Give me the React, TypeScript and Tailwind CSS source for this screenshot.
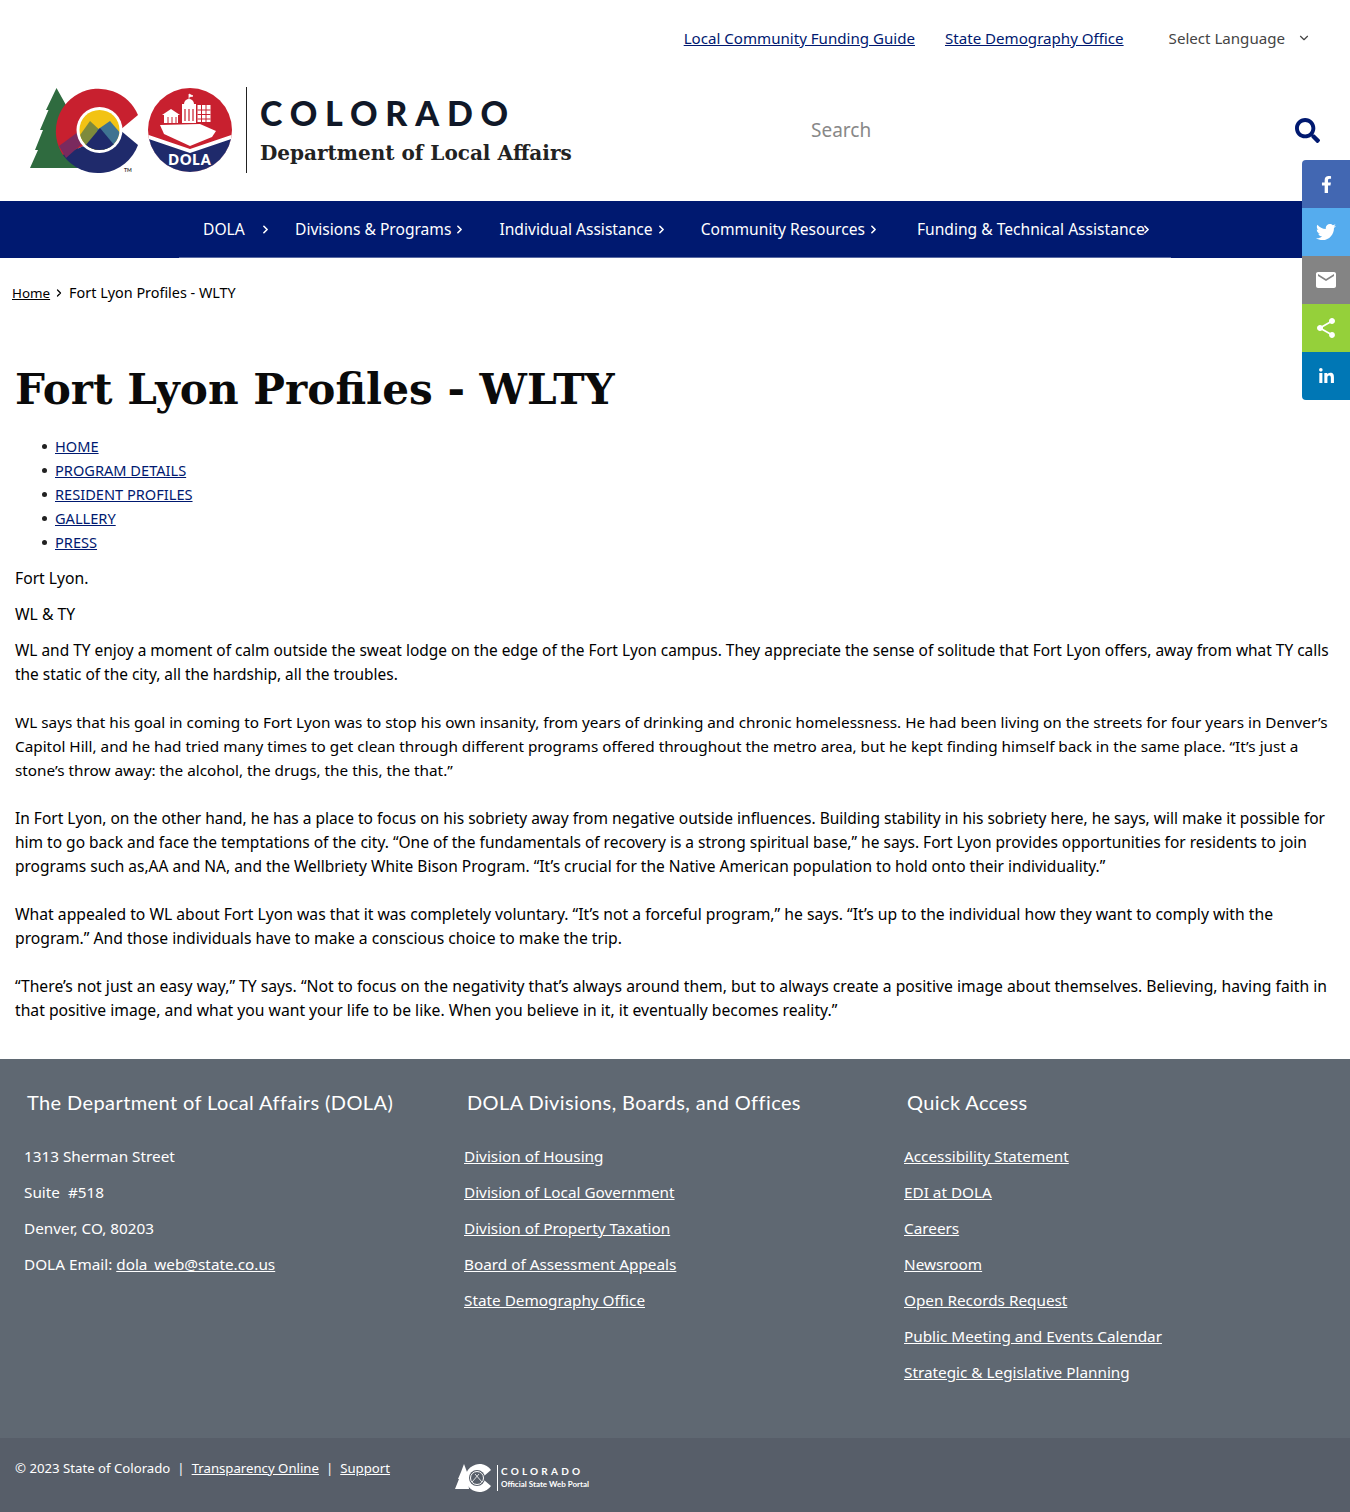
import { ChevronDown, ChevronRight } from "lucide-react";
import { FaFacebookF, FaTwitter, FaLinkedinIn, FaSearch } from "react-icons/fa";
import { MdEmail, MdShare } from "react-icons/md";

const nav = ["HOME", "PROGRAM DETAILS", "RESIDENT PROFILES", "GALLERY", "PRESS"];
const divisions = ["Division of Housing", "Division of Local Government", "Division of Property Taxation", "Board of Assessment Appeals", "State Demography Office"];
const quick = ["Accessibility Statement", "EDI at DOLA", "Careers", "Newsroom", "Open Records Request", "Public Meeting and Events Calendar", "Strategic & Legislative Planning"];

function Logo() {
  return (
    <svg width="208" height="88" viewBox="28 86 208 88">
      <defs>
        <clipPath id="co-sky"><circle cx="99.500" cy="130" r="20" /></clipPath>
        <clipPath id="dola-disc"><circle cx="190" cy="130" r="42" /></clipPath>
      </defs>
      <path d="M56.500 88 L46 110 L48.500 110 L40 130 L43 130 L35 150 L38 150 L30 168 L80 168 L75 120 L66 105 Z" fill="#2f6b3f" />
      <path d="M138 115 A42.700 42.700 0 1 0 63 155 L120 130 Z" fill="#c8202f" />
      <path d="M63 155 A42.700 42.700 0 0 0 138 145 L120 130 Z" fill="#1f2a6b" />
      <path d="M59 146 L66 158 L84 142 L78 132 Z" fill="#7a2a5e" />
      <circle cx="99.500" cy="130" r="23" fill="#ffffff" />
      <g clipPath="url(#co-sky)">
        <rect x="78" y="108" width="44" height="44" fill="#f2c313" />
        <path d="M78 138 L90 121 L104 134 L100 152 L78 152 Z" fill="#7d8a3c" />
        <path d="M97 130 L110 121 L122 135 L122 152 L104 152 Z" fill="#3f7391" />
        <path d="M80 152 L100 128 L120 152 Z" fill="#1f2a6b" />
      </g>
      <text x="124" y="172" fontFamily="Lato, sans-serif" fontWeight="700" fontSize="5" fill="#333333">TM</text>
      <circle cx="190" cy="130" r="42" fill="#c8202f" />
      <g clipPath="url(#dola-disc)">
        <path d="M146 134 L190 149 L234 134 L234 176 L146 176 Z" fill="#ffffff" />
        <path d="M146 138 L190 153 L234 138 L234 176 L146 176 Z" fill="#1f2a6b" />
      </g>
      <path d="M160 125 L200 124 L216 131 L212 137 L190 146 L164 134 Z" fill="#ffffff" />
      <rect x="182" y="104" width="14" height="19" fill="#ffffff" />
      <path d="M184 104 A5 5 0 0 1 194 104 Z" fill="#ffffff" />
      <path d="M189 99 L189 94 L193 96 L189 97" fill="#ffffff" stroke="#ffffff" strokeWidth="0.800" />
      <path d="M185 109 V121 M189 109 V121 M193 109 V121" stroke="#c8202f" strokeWidth="1.200" />
      <rect x="197.500" y="105" width="13" height="17" fill="#ffffff" />
      <path d="M197.500 110 H210.500 M197.500 114.500 H210.500 M197.500 119 H210.500 M201.500 105 V122 M206 105 V122" stroke="#c8202f" strokeWidth="1" />
      <rect x="164" y="115" width="14" height="8" fill="#ffffff" />
      <path d="M162 115 L171 109 L180 115 Z" fill="#ffffff" />
      <path d="M168 117 V123 M172 117 V123 M176 117 V123" stroke="#c8202f" strokeWidth="1" />
      <text x="190" y="165" textAnchor="middle" fontFamily="Lato, sans-serif" fontWeight="800" fontSize="14" letterSpacing="1" fill="#ffffff">DOLA</text>
    </svg>
  );
}

function SmallLogo() {
  return (
    <svg width="38" height="30" viewBox="0 0 38 30">
      <path d="M9 1 L12 9 L14 26 L0 26 L4 16 L3 16 L6 9 Z" fill="#ffffff" />
      <path d="M36 7 A14 14 0 1 0 36 23 L29 17 L29 13 Z" fill="#ffffff" />
      <circle cx="22" cy="15" r="8" fill="#575e69" />
      <circle cx="22" cy="15" r="6.500" fill="none" stroke="#ffffff" strokeWidth="1" />
      <path d="M17 19 L24 11 M20 11 L27 19" stroke="#ffffff" strokeWidth="0.800" />
    </svg>
  );
}

export default function App() {
  return (
    <div className="relative w-[1350px] h-[1512px] overflow-hidden bg-white text-black font-['Noto_Sans',sans-serif] text-[15.700px] leading-[24px] flex flex-col">
      <div className="h-[76px] flex items-center justify-end pr-[39px] text-[15.100px] text-[#001970]">
        <a className="underline">Local Community Funding Guide</a>
        <a className="underline ml-[30px]">State Demography Office</a>
        <span className="ml-[45px] text-[#444] flex items-center gap-[12px]">Select Language <ChevronDown size={14} /></span>
      </div>
      <div className="h-[125px] flex items-center pl-[28px] pr-[30px] pb-[17px]">
        <Logo />
        <div className="ml-[10px] w-px h-[86px] bg-[#222] mr-[13px]" />
        <div className="mt-[2px]">
          <div className="font-['Lato',sans-serif] font-black text-[34px] leading-[40px] tracking-[0.23em] text-[#101828] mb-[4px]">COLORADO</div>
          <div className="font-['DejaVu_Serif',serif] font-bold text-[20px] leading-[32px] text-[#222]">Department of Local Affairs</div>
        </div>
        <div className="ml-auto w-[509px] flex items-center justify-between">
          <span className="text-[#888] text-[19px]">Search</span>
          <FaSearch size={25} className="text-[#001970]" />
        </div>
      </div>
      <div className="h-[57px] bg-[#001970] flex justify-center text-white">
        <div className="w-[992px] h-[57px] border-b border-[#dfe3ee]/40 flex items-center pl-[24px] text-[15.600px] whitespace-nowrap">
          <span className="w-[92px] flex items-center">DOLA <ChevronRight size={13} strokeWidth={3} className="ml-[14px]" /></span>
          <span className="flex items-center gap-[2px]">Divisions &amp; Programs <ChevronRight size={13} strokeWidth={3} /></span>
          <span className="ml-[33px] flex items-center gap-[2px]">Individual Assistance <ChevronRight size={13} strokeWidth={3} /></span>
          <span className="ml-[33px] flex items-center gap-[2px]">Community Resources <ChevronRight size={13} strokeWidth={3} /></span>
          <span className="ml-[37px] flex items-center">Funding &amp; Technical Assistance<ChevronRight size={13} strokeWidth={3} className="-ml-[5px]" /></span>
        </div>
      </div>
      <div className="pl-[12px] pt-[23px] text-[14.400px] flex items-center gap-[3px]">
        <a className="underline text-[13.400px]">Home</a><ChevronRight size={12} strokeWidth={2.500} /><span className="ml-[1px]">Fort Lyon Profiles - WLTY</span>
      </div>
      <h1 className="pl-[15px] mt-[56px] font-['DejaVu_Serif',serif] font-bold text-[42.200px] leading-[56px] text-[#0a0a0a]">Fort Lyon Profiles - WLTY</h1>
      <ul className="mt-[17px] pl-[55px] text-[14.600px] text-[#001970]">
        {nav.map((n) => (
          <li key={n} className="flex items-center -ml-[13px] gap-[8px]">
            <span className="w-[5px] h-[5px] rounded-full bg-[#222]" />
            <a className="underline">{n}</a>
          </li>
        ))}
      </ul>
      <div className="px-[15px] mt-[12px] flex flex-col gap-[12px]">
        <p>Fort Lyon.</p>
        <p>WL &amp; TY</p>
        <div className="flex flex-col gap-[24px]">
          <p className="text-[15.450px]">WL and TY enjoy a moment of calm outside the sweat lodge on the edge of the Fort Lyon campus. They appreciate the sense of solitude that Fort Lyon offers, away from what TY calls the static of the city, all the hardship, all the troubles.</p>
          <p className="text-[15.300px]">WL says that his goal in coming to Fort Lyon was to stop his own insanity, from years of drinking and chronic homelessness. He had been living on the streets for four years in Denver’s Capitol Hill, and he had tried many times to get clean through different programs offered throughout the metro area, but he kept finding himself back in the same place. “It’s just a stone’s throw away: the alcohol, the drugs, the this, the that.”</p>
          <p className="text-[15.500px]">In Fort Lyon, on the other hand, he has a place to focus on his sobriety away from negative outside influences. Building stability in his sobriety here, he says, will make it possible for him to go back and face the temptations of the city. “One of the fundamentals of recovery is a strong spiritual base,” he says. Fort Lyon provides opportunities for residents to join programs such as,AA and NA, and the Wellbriety White Bison Program. “It’s crucial for the Native American population to hold onto their individuality.”</p>
          <p>What appealed to WL about Fort Lyon was that it was completely voluntary. “It’s not a forceful program,” he says. “It’s up to the individual how they want to comply with the program.” And those individuals have to make a conscious choice to make the trip.</p>
          <p>“There’s not just an easy way,” TY says. “Not to focus on the negativity that’s always around them, but to always create a positive image about themselves. Believing, having faith in that positive image, and what you want your life to be like. When you believe in it, it eventually becomes reality.”</p>
        </div>
      </div>
      <footer className="mt-auto">
        <div className="h-[379px] bg-[#5f6872] text-white text-[15.300px] grid grid-cols-[440px_440px_1fr] pl-[24px] pt-[30px]">
          <div>
            <h2 className="pl-[3px] font-['Lato',sans-serif] text-[20px] tracking-[0.02em] leading-[26px] mb-[29px]">The Department of Local Affairs (DOLA)</h2>
            <div className="flex flex-col gap-[12px]">
              <p>1313 Sherman Street</p>
              <p>Suite &nbsp;#518</p>
              <p>Denver, CO, 80203</p>
              <p>DOLA Email: <a className="underline">dola_web@state.co.us</a></p>
            </div>
          </div>
          <div>
            <h2 className="pl-[3px] font-['Lato',sans-serif] text-[20px] tracking-[0.02em] leading-[26px] mb-[29px]">DOLA Divisions, Boards, and Offices</h2>
            <div className="flex flex-col gap-[12px]">{divisions.map((d) => <a key={d} className="underline">{d}</a>)}</div>
          </div>
          <div>
            <h2 className="pl-[3px] font-['Lato',sans-serif] text-[20px] tracking-[0.02em] leading-[26px] mb-[29px]">Quick Access</h2>
            <div className="flex flex-col gap-[12px]">{quick.map((d) => <a key={d} className="underline">{d}</a>)}</div>
          </div>
        </div>
        <div className="h-[74px] bg-[#575e69] text-white flex pl-[15px] text-[13.200px]">
          <div className="w-[440px] pt-[18px] flex gap-[7px] items-start">
            <span>© 2023 State of Colorado</span><span>|</span><a className="underline">Transparency Online</a><span>|</span><a className="underline">Support</a>
          </div>
          <div className="pt-[25px] flex items-start gap-[4px]">
            <SmallLogo />
            <div className="border-l border-white pl-[3px] mt-[2px]">
              <div className="font-['Lato',sans-serif] font-bold text-[10px] leading-[13px] tracking-[0.32em]">COLORADO</div>
              <div className="font-['Lato',sans-serif] font-bold text-[8px] leading-[13px]">Official State Web Portal</div>
            </div>
          </div>
        </div>
      </footer>
      <div className="absolute right-0 top-[160px] w-[48px] rounded-l-[4px] overflow-hidden text-white flex flex-col">
        <div className="h-[48px] bg-[#4267b2] flex items-center justify-center"><FaFacebookF size={17} /></div>
        <div className="h-[48px] bg-[#55acee] flex items-center justify-center"><FaTwitter size={20} /></div>
        <div className="h-[48px] bg-[#848484] flex items-center justify-center"><MdEmail size={24} /></div>
        <div className="h-[48px] bg-[#95d03a] flex items-center justify-center"><MdShare size={24} /></div>
        <div className="h-[48px] bg-[#0077b5] flex items-center justify-center"><FaLinkedinIn size={17} /></div>
      </div>
    </div>
  );
}
